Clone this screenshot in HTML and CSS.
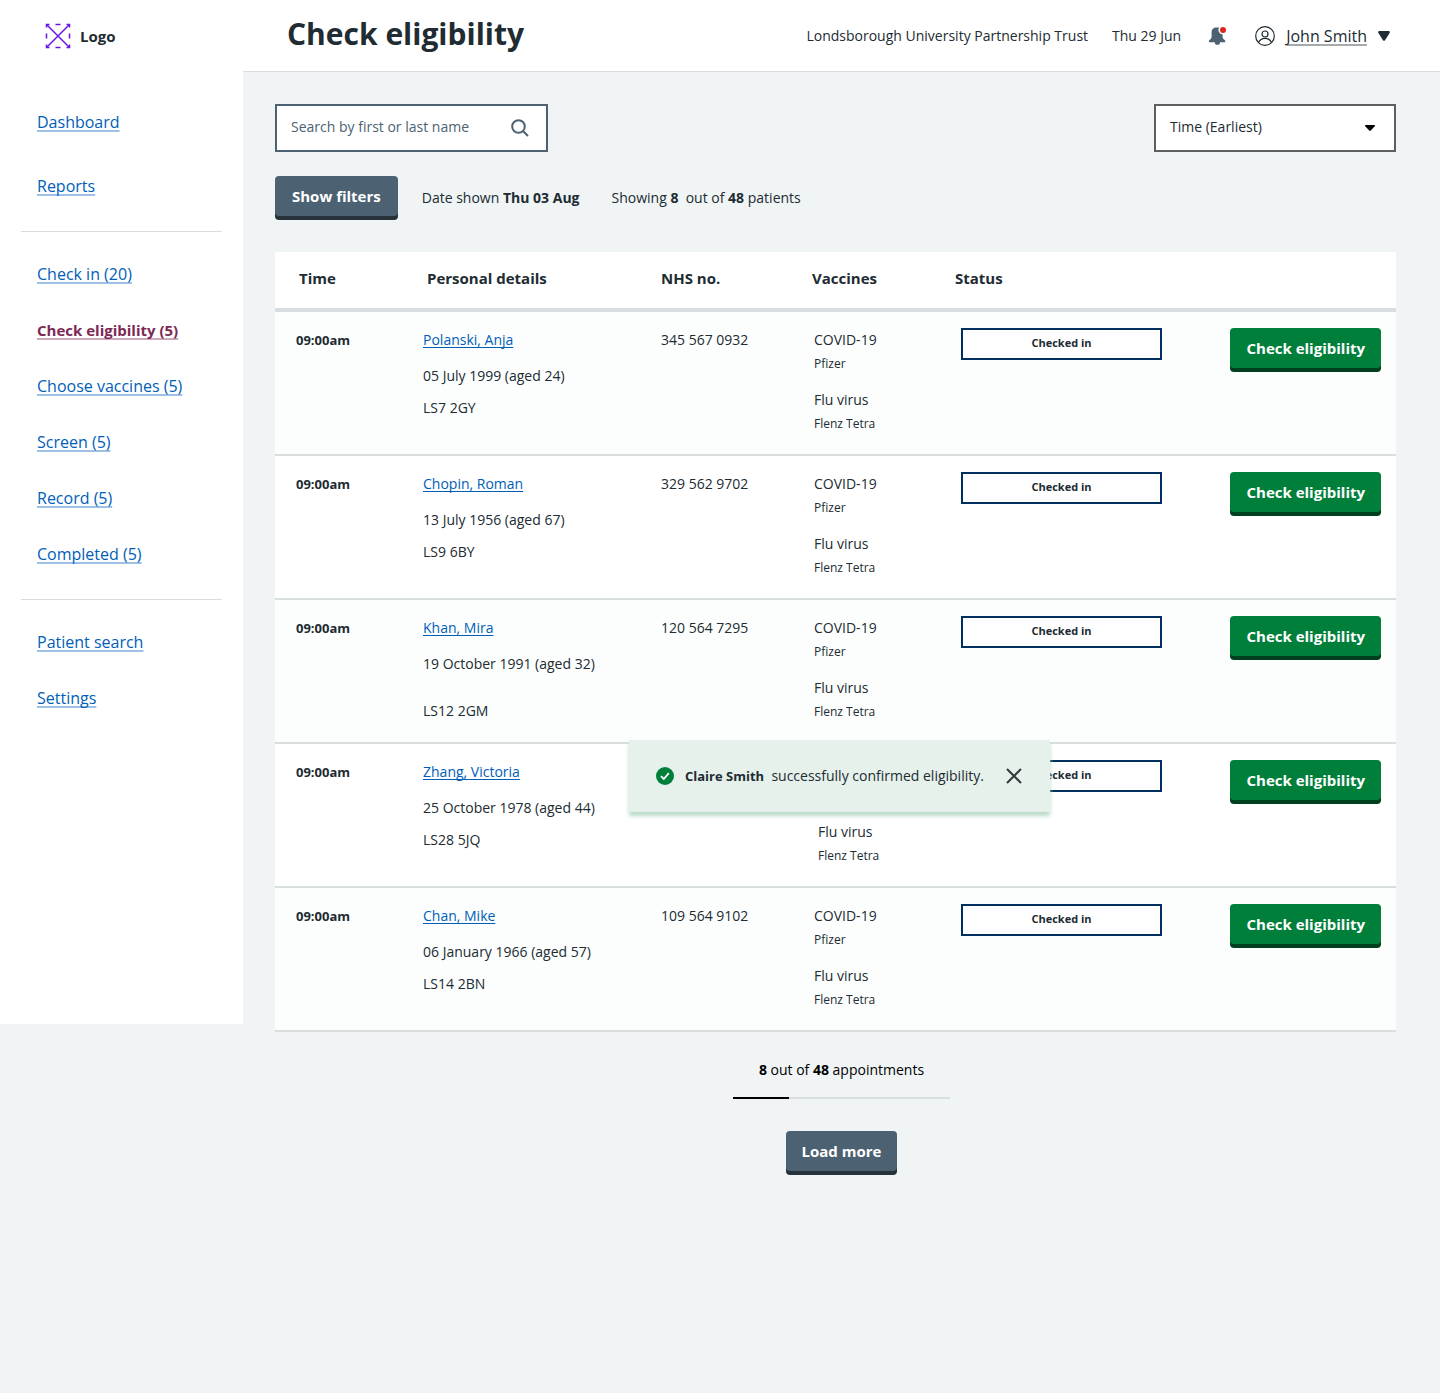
FILE: index.html
```html
<!DOCTYPE html>
<html lang="en">
<head>
<meta charset="utf-8">
<meta name="viewport" content="width=device-width, initial-scale=1">
<title>Check eligibility</title>
<link rel="stylesheet" href="styles.css">
</head>
<body>
<div class="app">
  <aside class="sidebar">
    <a class="logo" href="#">
      <svg class="logo-mark" width="26" height="26" viewBox="0 0 26 26" fill="none" stroke="#6a14ec" stroke-width="1.5" aria-hidden="true">
        <path d="M2 2l22 22M24 2L2 24"/>
        <path d="M1.500 4.500v-3h3M21.500 1.500h3v3M24.500 21.500v3h-3M4.500 24.500h-3v-3M10.500 1.500h5M10.500 24.500h5M1.500 10.500v5M24.500 10.500v5"/>
      </svg>
      <span>Logo</span>
    </a>
    <nav class="nav" aria-label="Main">
      <ul class="nav-group nav-group-wide">
        <li><a href="#">Dashboard</a></li>
        <li><a href="#">Reports</a></li>
      </ul>
      <ul class="nav-group">
        <li><a href="#">Check in (20)</a></li>
        <li><a class="is-current" href="#" aria-current="page">Check eligibility (5)</a></li>
        <li><a href="#">Choose vaccines (5)</a></li>
        <li><a href="#">Screen (5)</a></li>
        <li><a href="#">Record (5)</a></li>
        <li><a href="#">Completed (5)</a></li>
      </ul>
      <ul class="nav-group">
        <li><a href="#">Patient search</a></li>
        <li><a href="#">Settings</a></li>
      </ul>
    </nav>
  </aside>

  <div class="page">
    <header class="topbar">
      <h1 class="title">Check eligibility</h1>
      <div class="topbar-info">
        <span>Londsborough University Partnership Trust</span>
        <span>Thu 29 Jun</span>
        <button class="icon-button bell" type="button" aria-label="Notifications">
          <svg width="18" height="18" viewBox="0 0 18 18" aria-hidden="true">
            <path fill="#4c6272" d="M6.500.5H10a4.800 4.800 0 0 0 3.600 7v2c0 1.500.6 2.300 1.400 3l1.200 1v1.700h-5.200a2.600 2.600 0 0 1-5.200 0H0v-1.700l1.200-1c.8-.7 1.400-1.500 1.400-3V5C2.600 2.500 4.200.8 6.500.5z"/>
            <circle cx="14" cy="3" r="3" fill="#da291c"/>
          </svg>
        </button>
        <button class="user" type="button">
          <svg width="20" height="20" viewBox="0 0 20 20" fill="none" stroke="#212b32" stroke-width="1.200" aria-hidden="true">
            <circle cx="10" cy="10" r="9.300"/>
            <circle cx="10" cy="8" r="3"/>
            <path d="M3.500 16.500c1.200-2.600 3.500-4.200 6.500-4.200s5.300 1.600 6.500 4.200"/>
          </svg>
          <span class="user-name">John Smith</span>
          <svg width="12" height="10" viewBox="0 0 12 10" aria-hidden="true"><path fill="#212b32" d="M1 0h10q1.200 0.500.7 1.800L7 9.300q-1 1-2 0L.3 1.800Q-.2.5 1 0z"/></svg>
        </button>
      </div>
    </header>

    <main class="content">
      <div class="tools">
        <form class="search" role="search">
          <input type="search" aria-label="Search by first or last name" placeholder="Search by first or last name">
          <button class="icon-button" type="submit" aria-label="Search">
            <svg width="18" height="18" viewBox="0 0 18 18" fill="none" stroke="#4c6272" stroke-width="2" aria-hidden="true">
              <circle cx="7.500" cy="7.500" r="6.300"/><path d="M12 12l5 5"/>
            </svg>
          </button>
        </form>
        <div class="sort">
          <select aria-label="Sort by">
            <option>Time (Earliest)</option>
            <option>Time (Latest)</option>
          </select>
          <svg class="sort-arrow" width="10" height="6" viewBox="0 0 10 6" aria-hidden="true"><path d="M0.500 0h9q.7.500.2 1.200L5.800 5.500q-.8.700-1.600 0L.3 1.200Q-.2.5.5 0z"/></svg>
        </div>
      </div>

      <div class="filters">
        <button class="button button-secondary" type="button">Show filters</button>
        <span>Date shown <b>Thu 03 Aug</b></span>
        <span class="filters-count">Showing <b>8</b>&nbsp; out of <b>48</b> patients</span>
      </div>

      <div class="results">
        <table class="patients">
          <colgroup>
            <col class="col-time"><col class="col-details"><col class="col-nhs"><col class="col-vaccines"><col class="col-status"><col>
          </colgroup>
          <thead>
            <tr>
              <th scope="col" class="time">Time</th>
              <th scope="col" class="details">Personal details</th>
              <th scope="col">NHS no.</th>
              <th scope="col" class="vaccines">Vaccines</th>
              <th scope="col" class="status">Status</th>
              <td></td>
            </tr>
          </thead>
          <tbody>
            <tr>
              <td class="time">09:00am</td>
              <td class="details"><a href="#">Polanski, Anja</a><p>05 July 1999 (aged 24)</p><p>LS7 2GY</p></td>
              <td>345 567 0932</td>
              <td class="vaccines"><p>COVID-19</p><small>Pfizer</small><p>Flu virus</p><small>Flenz Tetra</small></td>
              <td class="status"><span class="tag">Checked in</span></td>
              <td class="action"><button class="button" type="button">Check eligibility</button></td>
            </tr>
            <tr>
              <td class="time">09:00am</td>
              <td class="details"><a href="#">Chopin, Roman</a><p>13 July 1956 (aged 67)</p><p>LS9 6BY</p></td>
              <td>329 562 9702</td>
              <td class="vaccines"><p>COVID-19</p><small>Pfizer</small><p>Flu virus</p><small>Flenz Tetra</small></td>
              <td class="status"><span class="tag">Checked in</span></td>
              <td class="action"><button class="button" type="button">Check eligibility</button></td>
            </tr>
            <tr>
              <td class="time">09:00am</td>
              <td class="details details-spaced"><a href="#">Khan, Mira</a><p>19 October 1991 (aged 32)</p><p>LS12 2GM</p></td>
              <td>120 564 7295</td>
              <td class="vaccines"><p>COVID-19</p><small>Pfizer</small><p>Flu virus</p><small>Flenz Tetra</small></td>
              <td class="status"><span class="tag">Checked in</span></td>
              <td class="action"><button class="button" type="button">Check eligibility</button></td>
            </tr>
            <tr class="row-confirmed">
              <td class="time">09:00am</td>
              <td class="details"><a href="#">Zhang, Victoria</a><p>25 October 1978 (aged 44)</p><p>LS28 5JQ</p></td>
              <td></td>
              <td class="vaccines"><p>COVID-19</p><small>Pfizer</small><p>Flu virus</p><small>Flenz Tetra</small></td>
              <td class="status"><span class="tag">Checked in</span></td>
              <td class="action"><button class="button" type="button">Check eligibility</button></td>
            </tr>
            <tr>
              <td class="time">09:00am</td>
              <td class="details"><a href="#">Chan, Mike</a><p>06 January 1966 (aged 57)</p><p>LS14 2BN</p></td>
              <td>109 564 9102</td>
              <td class="vaccines"><p>COVID-19</p><small>Pfizer</small><p>Flu virus</p><small>Flenz Tetra</small></td>
              <td class="status"><span class="tag">Checked in</span></td>
              <td class="action"><button class="button" type="button">Check eligibility</button></td>
            </tr>
          </tbody>
        </table>

        <div class="toast" role="status">
          <svg width="18" height="18" viewBox="0 0 18 18" aria-hidden="true">
            <circle cx="9" cy="9" r="9" fill="#007f3b"/><path d="M5 9.200l2.800 2.800 5-5.800" fill="none" stroke="#fff" stroke-width="1.800"/>
          </svg>
          <p><b>Claire Smith</b>&nbsp; successfully confirmed eligibility.</p>
          <button class="icon-button" type="button" aria-label="Dismiss">
            <svg width="16" height="16" viewBox="0 0 16 16" fill="none" stroke="#33383e" stroke-width="2" aria-hidden="true"><path d="M1 1l14 14M15 1L1 15"/></svg>
          </button>
        </div>
      </div>
    </main>

    <footer class="pager">
      <label for="loaded"><b>8</b> out of <b>48</b> appointments</label>
      <progress id="loaded" value="56" max="217"></progress>
      <button class="button button-secondary" type="button">Load more</button>
    </footer>
  </div>
</div>
</body>
</html>
```
FILE: styles.css
```css
:root {
  --ink: #212b32;
  --slate: #4c6272;
  --link: #005eb8;
  --line: #d8dde0;
  --ground: #f0f4f5;
}

* { box-sizing: border-box; }

body {
  margin: 0;
  background: var(--ground);
  color: var(--ink);
  font: 14px/24px "Open Sans", sans-serif;
}

h1, p, ul { margin: 0; padding: 0; }
ul { list-style: none; }
b, th { font-weight: 700; }
a { color: var(--link); }
svg { display: block; flex: none; }
button, input, select { font: inherit; color: inherit; }

.app {
  display: grid;
  grid-template-columns: 243px minmax(0, 1fr);
  align-items: start;
}

/* Sidebar */
.sidebar {
  min-height: 1024px;
  background: #fff;
  font-size: 16px;
}

.logo {
  display: flex;
  align-items: center;
  gap: 9px;
  height: 72px;
  padding-left: 45px;
  color: var(--ink);
  font-size: 15px;
  font-weight: 700;
  line-height: 20px;
  text-decoration: none;
}

.nav { padding: 0 21px; }

.nav-group {
  display: grid;
  gap: 32px;
  padding: 30px 16px 33px;
}

.nav-group-wide {
  gap: 40px;
  padding-top: 38px;
}

.nav-group + .nav-group { border-top: 1px solid var(--line); }

.nav a,
.user-name {
  text-decoration: underline 2px;
  text-decoration-color: #9fc2e4;
  text-decoration-skip-ink: none;
  text-underline-offset: 2px;
}

.nav .is-current {
  color: #7c2855;
  font-size: 15px;
  font-weight: 700;
  text-decoration-color: #cba9bb;
}

/* Top bar */
.topbar {
  display: flex;
  align-items: center;
  justify-content: space-between;
  height: 72px;
  padding: 0 50px 0 44px;
  background: #fff;
  border-bottom: 1px solid var(--line);
}

.title {
  padding-bottom: 4px;
  font-size: 30px;
  font-weight: 700;
  line-height: 40px;
}

.topbar-info {
  display: flex;
  align-items: center;
  gap: 24px;
}

.icon-button,
.user {
  padding: 0;
  border: 0;
  background: none;
  cursor: pointer;
}

.bell { margin: 0 4px; }

.user {
  display: flex;
  align-items: center;
  gap: 11px;
  font-size: 16px;
}

.user-name { text-decoration-color: #a6aaad; }

/* Search, sort and filters */
.content { padding: 32px 44px 0 32px; }

.tools {
  display: flex;
  justify-content: space-between;
}

.search,
.sort {
  display: flex;
  align-items: center;
  height: 48px;
  border: 2px solid var(--slate);
  background: #fff;
}

.search {
  width: 273px;
  padding: 0 17px 0 14px;
}

.search input {
  flex: 1;
  min-width: 0;
  padding: 0 0 2px;
  border: 0;
  background: none;
  appearance: none;
}

.search input::placeholder { color: var(--slate); opacity: 1; }

.sort {
  display: grid;
  width: 242px;
  border-color: #5f5f5f;
}

.sort select {
  grid-area: 1 / 1;
  height: 44px;
  padding: 0 40px 2px 14px;
  border: 0;
  background: none;
  appearance: none;
}

.sort-arrow {
  grid-area: 1 / 1;
  justify-self: end;
  margin-right: 19px;
  pointer-events: none;
}

.filters {
  display: flex;
  align-items: center;
  gap: 24px;
  margin: 24px 0 32px;
}

.filters-count { margin-left: 8px; }

.button {
  padding: 8px 16px;
  border: 0;
  border-radius: 4px;
  background: #007f3b;
  box-shadow: 0 4px 0 #00401e;
  color: #fff;
  font-size: 15px;
  font-weight: 700;
  white-space: nowrap;
  cursor: pointer;
}

.button-secondary {
  margin-bottom: 4px;
  background: var(--slate);
  box-shadow: 0 4px 0 #263139;
}

.filters .button { padding: 8px 17px; }

/* Patient table */
.results { position: relative; }

.patients {
  width: 100%;
  border-collapse: collapse;
  table-layout: fixed;
  background: #fff;
}

.col-time { width: 132px; }
.col-details { width: 238px; }
.col-nhs { width: 153px; }
.col-vaccines { width: 147px; }
.col-status { width: 256px; }

.patients th,
.patients td {
  padding: 16px 0 18px 16px;
  text-align: left;
  vertical-align: top;
}

.patients thead tr { border-bottom: 4px solid var(--line); }

.patients thead th {
  padding-top: 14px;
  font-size: 15px;
}

.patients th.time { padding-left: 24px; }
.patients th.details { padding-left: 20px; }
.patients th.vaccines { padding-left: 14px; }
.patients th.status { padding-left: 10px; }

.patients tbody tr {
  height: 144px;
  border-bottom: 2px solid var(--line);
}

.patients tbody tr:nth-child(odd) { background: #fcfefd; }

.patients td.time {
  padding-left: 21px;
  font-size: 13px;
  font-weight: 700;
}

.patients td.action {
  padding-right: 15px;
  text-align: right;
}

.details a {
  display: inline-block;
  text-decoration-thickness: 1px;
  text-decoration-skip-ink: none;
  text-underline-offset: 2px;
}

.details p { margin-top: 8px; }
.details a + p { margin-top: 12px; }
.details-spaced p + p { margin-top: 23px; }

.vaccines small {
  display: block;
  font-size: 12px;
}

.vaccines small + p { margin-top: 12px; }
.patients .row-confirmed .vaccines { padding-left: 20px; }

.tag {
  display: block;
  width: 201px;
  height: 32px;
  border: 2px solid #003060;
  background: #fff;
  font-size: 11px;
  font-weight: 700;
  line-height: 26px;
  text-align: center;
}

.toast {
  position: absolute;
  top: 488px;
  left: 354px;
  display: flex;
  align-items: center;
  width: 421px;
  height: 72px;
  padding: 0 28px 0 27px;
  background: #e5f1ea;
  box-shadow: 0 4px 4px #b9dcc8;
}

.toast p {
  flex: 1;
  padding-left: 11px;
  white-space: nowrap;
}

.toast b { font-size: 13px; }

/* Load more */
.pager {
  display: grid;
  justify-items: center;
  padding: 26px 0;
  color: #000;
}

.pager progress {
  width: 217px;
  height: 2px;
  margin: 15px 0 32px;
  border: 0;
  background: var(--line);
  appearance: none;
}

.pager progress::-webkit-progress-bar { background: var(--line); }
.pager progress::-webkit-progress-value { background: #000; }
```
